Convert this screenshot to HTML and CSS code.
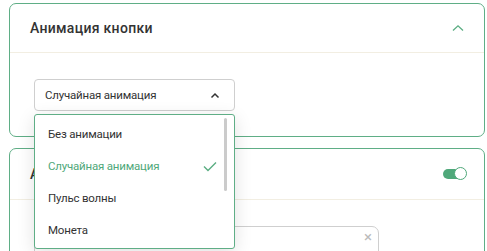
FILE: index.html
```html
<!DOCTYPE html>
<html lang="ru">
<head>
  <meta charset="UTF-8" />
  <title>Анимация кнопки</title>
  <link rel="stylesheet" href="styles.css">
</head>
<body>
  <div class="panel">
    <div class="panel-head">
      <h3>Анимация кнопки</h3>
      <svg class="chev" width="12" height="8" viewBox="0 0 12 8"><path d="M1 6.5 L6 1.8 L11 6.5" fill="none" stroke="#5aad82" stroke-width="1.3"/></svg>
    </div>
    <div class="panel-body">
      <div class="select-wrap">
        <div class="select">
          <span>Случайная анимация</span>
          <svg width="10" height="7" viewBox="0 0 10 7"><path d="M1.5 5.5 L5 2 L8.5 5.5" fill="none" stroke="#333" stroke-width="1.5"/></svg>
        </div>
        <ul class="options">
          <li>Без анимации</li>
          <li class="selected">Случайная анимация
            <svg width="14" height="11" viewBox="0 0 14 11"><path d="M1 5.5 L5 9.5 L13 1.5" fill="none" stroke="#5aad82" stroke-width="1.4"/></svg>
          </li>
          <li>Пульс волны</li>
          <li>Монета</li>
          <span class="scroll"></span>
        </ul>
      </div>
    </div>
  </div>

  <div class="panel second">
    <div class="panel-head tall">
      <h3>Анимация при наведении</h3>
      <span class="toggle"><span class="knob"></span></span>
    </div>
    <div class="panel-body">
      <div class="field">
        <span class="close">&times;</span>
        <div class="field-row">
          <span class="dot"></span>
          <span class="label">Цвет</span>
        </div>
      </div>
    </div>
  </div>
</body>
</html>
```

FILE: styles.css
```css
html, body {
  height: 100%;
  overflow: hidden;
}
body {
  margin: 0;
  padding: 3px 2px 0 9px;
  background: #fff;
  font-family: Roboto, 'Noto Sans', sans-serif;
  color: #333;
}
.panel {
  border: 1px solid #5fae86;
  border-radius: 7px;
  background: #fff;
}
.panel.second {
  margin-top: 11px;
  height: 200px;
}
.panel-head {
  height: 48px;
  display: flex;
  align-items: center;
  justify-content: space-between;
  padding: 0 20px;
  border-bottom: 1px solid #f2eee2;
}
.panel-head.tall {
  height: 50px;
}
.panel-head h3 {
  margin: 0;
  font-size: 14px;
  font-weight: 500;
  color: #333;
  letter-spacing: 0.3px;
}
.panel-body {
  padding: 26px 24px 25px;
}
.select-wrap {
  position: relative;
  width: 201px;
}
.select {
  height: 32px;
  box-sizing: border-box;
  border: 1px solid #cfcfcf;
  border-radius: 4px;
  display: flex;
  align-items: center;
  justify-content: space-between;
  padding: 0 14px 0 10px;
  font-size: 11.5px;
  letter-spacing: -0.2px;
}
.options {
  position: absolute;
  top: 35px;
  left: 0;
  width: 201px;
  height: 135px;
  box-sizing: border-box;
  margin: 0;
  padding: 3px 0 0;
  list-style: none;
  background: #fff;
  border: 1px solid #5fae86;
  border-radius: 3px;
  box-shadow: 0 4px 18px rgba(0, 0, 0, 0.12);
  z-index: 5;
  overflow: hidden;
}
.options li {
  height: 32px;
  display: flex;
  align-items: center;
  justify-content: space-between;
  padding: 0 17px 0 13px;
  font-size: 11.5px;
  letter-spacing: -0.2px;
  color: #333;
}
.options li.selected {
  color: #4fa87a;
}
.scroll {
  position: absolute;
  right: 7px;
  top: 3px;
  width: 3px;
  height: 73px;
  background: #cbcbcb;
  border-radius: 2px;
}
.toggle {
  position: relative;
  width: 22px;
  height: 10px;
  border-radius: 5px;
  background: #4fa87a;
  margin-right: -1px;
}
.knob {
  position: absolute;
  right: -2px;
  top: -2px;
  width: 13px;
  height: 13px;
  box-sizing: border-box;
  border-radius: 50%;
  background: #fff;
  border: 1.5px solid #4fa87a;
}
.field {
  position: relative;
  width: 345px;
  height: 60px;
  box-sizing: border-box;
  border: 1px solid #cfcfcf;
  border-radius: 7px;
  padding: 22px 0 0 108px;
}
.close {
  position: absolute;
  right: 6px;
  top: 1px;
  font-size: 15px;
  color: #bbb;
}
.field-row {
  display: flex;
  align-items: center;
  gap: 18px;
  font-size: 12px;
}
.dot {
  width: 10px;
  height: 10px;
  border-radius: 50%;
  background: #999;
}
```
